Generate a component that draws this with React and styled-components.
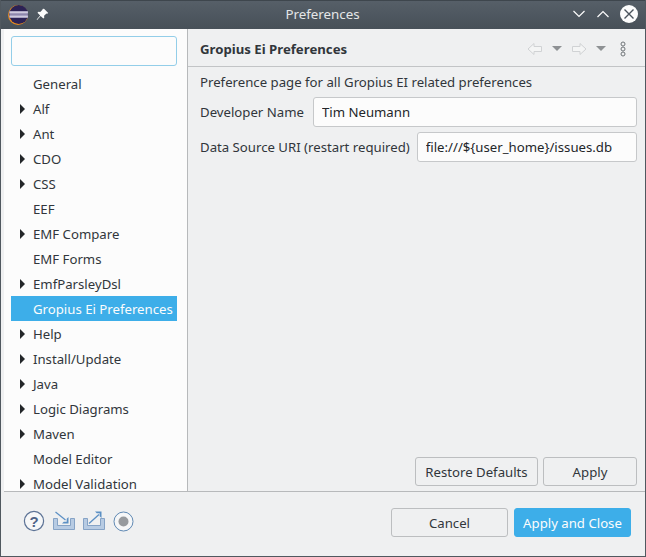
import styled, { createGlobalStyle } from 'styled-components';

const Global = createGlobalStyle`
  html, body { margin: 0; padding: 0; background: #eff0f1; }
  body { font-family: "Noto Sans", sans-serif; font-size: 13.2px; color: #31363b; }
`;

const items = [
  ['General', false],
  ['Alf', true],
  ['Ant', true],
  ['CDO', true],
  ['CSS', true],
  ['EEF', false],
  ['EMF Compare', true],
  ['EMF Forms', false],
  ['EmfParsleyDsl', true],
  ['Gropius Ei Preferences', false, true],
  ['Help', true],
  ['Install/Update', true],
  ['Java', true],
  ['Logic Diagrams', true],
  ['Maven', true],
  ['Model Editor', false],
  ['Model Validation', true]
];

const App = () => (
  <Window>
    <Global />
    <TitleBar>
      <TitleLeft>
        <svg width="22" height="22" viewBox="0 0 22 22">
          <circle cx="11" cy="12" r="10" fill="#e8891c" />
          <circle cx="11.700" cy="11.500" r="9.400" fill="#2c2255" />
          <rect x="2.500" y="8" width="18.400" height="7" fill="#8d86ad" />
          <rect x="2.500" y="8.500" width="18.400" height="1.800" fill="#cfcade" />
          <rect x="2.500" y="12.600" width="18.400" height="1.800" fill="#cfcade" />
        </svg>
        <svg width="13" height="13" viewBox="0 0 14 14">
          <path d="M8.600.8l4.600 4.600-1.200.7-.7-.3-2.600 2.600.2 2-1 1L5 8.500 1.200 12.800l-.5-.5L4.500 8 1.600 5.100l1-1 2 .2 2.600-2.600-.3-.7z" fill="#fcfcfc" />
        </svg>
      </TitleLeft>
      <TitleText>Preferences</TitleText>
      <TitleRight>
        <svg width="14" height="10" viewBox="0 0 14 10">
          <path d="M1.500 2l5.500 5.500L12.500 2" fill="none" stroke="#fcfcfc" strokeWidth="1.200" />
        </svg>
        <svg width="14" height="10" viewBox="0 0 14 10">
          <path d="M1.500 8L7 2.500 12.500 8" fill="none" stroke="#fcfcfc" strokeWidth="1.200" />
        </svg>
        <svg width="18" height="18" viewBox="0 0 18 18">
          <circle cx="9" cy="9" r="9" fill="#fcfcfc" />
          <path d="M4.500 4.500l9 9M13.500 4.500l-9 9" stroke="#4a535c" strokeWidth="1.400" />
        </svg>
      </TitleRight>
    </TitleBar>
    <Main>
      <Sidebar>
        <SearchInput />
        <Tree>
          {items.map(([label, arrow, selected]) => (
            <TreeRow key={label} $selected={selected}>
              <Arrow>{arrow && <ArrowShape />}</Arrow>
              <span>{label}</span>
            </TreeRow>
          ))}
        </Tree>
      </Sidebar>
      <Content>
        <Header>
          <HeaderTitle>Gropius Ei Preferences</HeaderTitle>
          <HeaderTools>
            <svg width="16" height="14" viewBox="0 0 16 14">
              <path d="M7 1.500L1 7l6 5.500V9.500h7.500v-5H7z" fill="#f4f5f5" stroke="#d0d2d4" />
            </svg>
            <Caret />
            <svg width="16" height="14" viewBox="0 0 16 14">
              <path d="M9 1.500L15 7l-6 5.500V9.500H1.500v-5H9z" fill="#f4f5f5" stroke="#d0d2d4" />
            </svg>
            <Caret />
            <MenuDots width="6" height="16" viewBox="0 0 6 16">
              <circle cx="3" cy="3" r="2" fill="none" stroke="#6f7478" />
              <circle cx="3" cy="8" r="2" fill="none" stroke="#6f7478" />
              <circle cx="3" cy="13" r="2" fill="none" stroke="#6f7478" />
            </MenuDots>
          </HeaderTools>
        </Header>
        <Form>
          <Description>Preference page for all Gropius EI related preferences</Description>
          <FieldRow $gap={9}>
            <span>Developer Name</span>
            <Field defaultValue="Tim Neumann" />
          </FieldRow>
          <FieldRow $gap={7}>
            <span>Data Source URI (restart required)</span>
            <Field defaultValue="file:///${user_home}/issues.db" />
          </FieldRow>
        </Form>
        <PageButtons>
          <Button $width={123}>Restore Defaults</Button>
          <Button $width={94}>Apply</Button>
        </PageButtons>
      </Content>
    </Main>
    <Footer>
      <FooterIcons>
        <svg width="22" height="22" viewBox="0 0 22 22">
          <circle cx="11" cy="11" r="9.600" fill="#f6f7f8" stroke="#5d7396" strokeWidth="1.200" />
          <text x="11" y="16.500" textAnchor="middle" fontFamily="Liberation Sans" fontWeight="700" fontSize="15" fill="#4f6388">?</text>
        </svg>
        <svg width="22" height="20" viewBox="0 0 22 20">
          <path d="M.5 7.500h4v7h13v-7h4v11H.5z" fill="#b7cbe3" stroke="#7d9cc2" strokeWidth=".9" />
          <path d="M2.500 1l10 8" fill="none" stroke="#5b8fc4" strokeWidth="1.300" />
          <path d="M15.500 6v6.500H9l1.800-1.800h2.900V7.800z" fill="#5b8fc4" />
        </svg>
        <svg width="22" height="20" viewBox="0 0 22 20">
          <path d="M.5 7.500h4v7h13v-7h4v11H.5z" fill="#b7cbe3" stroke="#7d9cc2" strokeWidth=".9" />
          <path d="M6 12.500L16 3.500" fill="none" stroke="#5b8fc4" strokeWidth="1.300" />
          <path d="M18.500.5V7l-1.800-1.800V2.300h-2.900L12 .5z" fill="#5b8fc4" />
        </svg>
        <svg width="21" height="21" viewBox="0 0 21 21">
          <circle cx="10.500" cy="10.500" r="9.500" fill="#f6f7f8" stroke="#4f7dab" strokeWidth=".9" />
          <circle cx="10.500" cy="10.500" r="5" fill="#979a9e" />
        </svg>
      </FooterIcons>
      <FooterButtons>
        <Button $width={117}>Cancel</Button>
        <Button $width={117} $primary>Apply and Close</Button>
      </FooterButtons>
    </Footer>
  </Window>
);

const Window = styled.div`
  width: 646px;
  height: 557px;
  display: flex;
  flex-direction: column;
  overflow: hidden;
  box-sizing: border-box;
  border-left: 1px solid #50585f;
  border-right: 1px solid #50585f;
  border-bottom: 1px solid #50585f;
  background: #eff0f1;
`;

const TitleBar = styled.header`
  flex: 0 0 29px;
  display: grid;
  grid-template-columns: 1fr auto 1fr;
  align-items: center;
  padding: 0 8px 2px 7px;
  margin: 0 -1px;
  background: linear-gradient(#565f68, #475058);
  border-top: 1px solid #3e464d;
  box-sizing: border-box;
  color: #e4e6e7;
`;

const TitleLeft = styled.div`
  display: flex;
  align-items: center;
  gap: 7px;
`;

const TitleText = styled.div`
  font-size: 13.33px;
`;

const TitleRight = styled.div`
  display: flex;
  align-items: center;
  justify-content: flex-end;
  gap: 10px;
`;

const Main = styled.div`
  flex: 0 0 462px;
  min-height: 0;
  display: flex;
  border-bottom: 1px solid #b7b9bb;
  margin-left: 3px;
`;

const Sidebar = styled.nav`
  flex: 0 0 183px;
  min-height: 0;
  display: flex;
  flex-direction: column;
  overflow: hidden;
  background: #fcfcfc;
  border-right: 1px solid #b7b9bb;
`;

const SearchInput = styled.input`
  flex: 0 0 30px;
  width: 166px;
  margin: 7px 0 5px 7px;
  padding: 0;
  box-sizing: border-box;
  background: #fcfcfc;
  border: 1px solid #93cee9;
  border-radius: 3px;
  outline: none;
`;

const Tree = styled.ul`
  list-style: none;
  margin: 0;
  padding: 0 10px 0 7px;
`;

const TreeRow = styled.li`
  flex: none;
  height: 25px;
  display: flex;
  align-items: center;
  white-space: nowrap;
  background: ${(p) => (p.$selected ? '#3daee9' : 'transparent')};
  color: ${(p) => (p.$selected ? '#fcfcfc' : '#31363b')};
`;

const Arrow = styled.span`
  flex: 0 0 22px;
  display: flex;
  justify-content: center;
`;

const ArrowShape = styled.i`
  width: 0;
  height: 0;
  border-left: 5px solid #232629;
  border-top: 5px solid transparent;
  border-bottom: 5px solid transparent;
`;

const Content = styled.section`
  flex: 1;
  display: flex;
  flex-direction: column;
  min-width: 0;
`;

const Header = styled.div`
  flex: 0 0 38px;
  display: flex;
  align-items: center;
  justify-content: space-between;
  padding: 2px 19px 0 12px;
  box-sizing: border-box;
  border-bottom: 1px solid #c2c4c6;
`;

const HeaderTitle = styled.div`
  font-weight: 700;
`;

const HeaderTools = styled.div`
  display: flex;
  align-items: center;
  gap: 9px;
`;

const Caret = styled.i`
  width: 0;
  height: 0;
  border-top: 5px solid #8e9194;
  border-left: 5px solid transparent;
  border-right: 5px solid transparent;
`;

const MenuDots = styled.svg`
  margin-left: 5px;
`;

const Form = styled.div`
  flex: 1;
  padding: 5px 8px 0 12px;
  display: flex;
  flex-direction: column;
  gap: 5px;
`;

const Description = styled.div`
  line-height: 20px;
`;

const FieldRow = styled.label`
  display: flex;
  align-items: center;
  gap: ${(p) => p.$gap}px;
  height: 30px;
  white-space: nowrap;
`;

const Field = styled.input`
  flex: 1;
  min-width: 0;
  height: 30px;
  box-sizing: border-box;
  padding: 0 8px;
  font: inherit;
  color: #232629;
  background: #fcfcfc;
  border: 1px solid #c6c8ca;
  border-radius: 3px;
  outline: none;
`;

const PageButtons = styled.div`
  display: flex;
  justify-content: flex-end;
  gap: 5px;
  padding: 0 8px 5px 0;
`;

const Button = styled.button`
  width: ${(p) => p.$width}px;
  height: 29px;
  padding: 0;
  font: inherit;
  color: ${(p) => (p.$primary ? '#fcfcfc' : '#31363b')};
  background: ${(p) => (p.$primary ? '#3daee9' : '#eff0f1')};
  border: 1px solid ${(p) => (p.$primary ? '#3daee9' : '#bcbec0')};
  border-radius: 3px;
`;

const Footer = styled.footer`
  flex: 1;
  display: flex;
  align-items: center;
  justify-content: space-between;
  padding: 0 14px 3px 22px;
`;

const FooterIcons = styled.div`
  display: flex;
  align-items: center;
  gap: 8px;
  padding-bottom: 3px;
`;

const FooterButtons = styled.div`
  display: flex;
  gap: 6px;
`;

export default App;
